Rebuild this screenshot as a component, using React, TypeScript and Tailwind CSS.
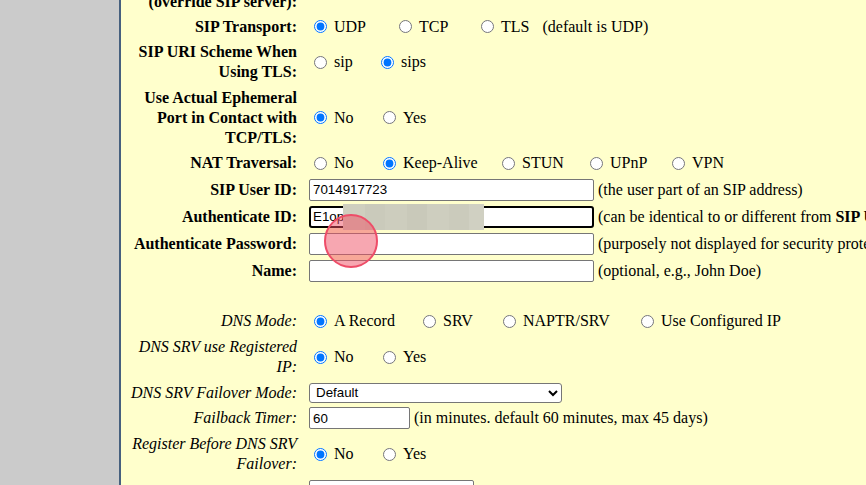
import React from "react";

type Opt = { label: string; checked?: boolean; w?: number };

const widthClass: Record<number, string> = {
  85: "w-[85px]",
  82: "w-[82px]",
  67: "w-[67px]",
  69: "w-[69px]",
  119: "w-[119px]",
  88: "w-[88px]",
  109: "w-[109px]",
  80: "w-[80px]",
  138: "w-[138px]",
};

function Radios({ name, opts, hint }: { name: string; opts: Opt[]; hint?: string }) {
  return (
    <div className="flex items-center">
      {opts.map((o) => (
        <label
          key={o.label}
          className={`flex shrink-0 items-center ${o.w ? widthClass[o.w] : ""}`}
        >
          <input
            type="radio"
            name={name}
            defaultChecked={!!o.checked}
            className="m-0 ml-[5px] mr-[7px] h-[13px] w-[13px] shrink-0"
          />
          <span>{o.label}</span>
        </label>
      ))}
      {hint && <span className="ml-[13px]">{hint}</span>}
    </div>
  );
}

const inputCls =
  "h-[22px] border border-[#767676] rounded-[2px] bg-white px-[3px] text-[13.33px] font-['Liberation_Sans',Arial,sans-serif] text-black outline-none";

function Label({ children, italic }: { children: React.ReactNode; italic?: boolean }) {
  return (
    <td className="p-0 align-middle">
      <div
        className={`w-[179px] pr-[3px] text-right leading-[20px] whitespace-nowrap ${
          italic ? "italic font-normal" : "font-bold"
        }`}
      >
        {children}
      </div>
    </td>
  );
}

function Value({ children }: { children?: React.ReactNode }) {
  return <td className="p-0 pl-[9px] align-middle whitespace-nowrap leading-[20px]">{children}</td>;
}

export default function App() {
  return (
    <div className="relative flex h-[485px] w-[866px] overflow-hidden bg-[#cbcbcb] font-['Liberation_Serif',serif] text-[16px] text-black">
      <div className="w-[119px] shrink-0 bg-[#cbcbcb]" />
      <div className="flex-1 overflow-hidden border-l-2 border-[#46607e] bg-[#ffffcc]">
        <table className="-mt-[11px] w-max border-collapse">
          <tbody>
            <tr className="h-[25px]">
              <Label>(override SIP server):</Label>
              <Value />
            </tr>
            <tr className="h-[25px]">
              <Label>SIP Transport:</Label>
              <Value>
                <Radios
                  name="transport"
                  opts={[
                    { label: "UDP", checked: true, w: 85 },
                    { label: "TCP", w: 82 },
                    { label: "TLS" },
                  ]}
                  hint="(default is UDP)"
                />
              </Value>
            </tr>
            <tr className="h-[46px]">
              <Label>
                SIP URI Scheme When
                <br />
                Using TLS:
              </Label>
              <Value>
                <Radios
                  name="scheme"
                  opts={[{ label: "sip", w: 67 }, { label: "sips", checked: true }]}
                />
              </Value>
            </tr>
            <tr className="h-[65px]">
              <Label>
                Use Actual Ephemeral
                <br />
                Port in Contact with
                <br />
                TCP/TLS:
              </Label>
              <Value>
                <Radios
                  name="ephemeral"
                  opts={[{ label: "No", checked: true, w: 69 }, { label: "Yes" }]}
                />
              </Value>
            </tr>
            <tr className="h-[26px]">
              <Label>NAT Traversal:</Label>
              <Value>
                <Radios
                  name="nat"
                  opts={[
                    { label: "No", w: 69 },
                    { label: "Keep-Alive", checked: true, w: 119 },
                    { label: "STUN", w: 88 },
                    { label: "UPnP", w: 82 },
                    { label: "VPN" },
                  ]}
                />
              </Value>
            </tr>
            <tr className="h-[27px]">
              <Label>SIP User ID:</Label>
              <Value>
                <div className="flex items-center">
                  <input className={`${inputCls} w-[285px]`} defaultValue="7014917723" readOnly />
                  <span className="ml-[4px]">(the user part of an SIP address)</span>
                </div>
              </Value>
            </tr>
            <tr className="h-[27px]">
              <Label>Authenticate ID:</Label>
              <Value>
                <div className="flex items-center">
                  <input
                    className="h-[22px] w-[285px] rounded-[3px] border-2 border-black bg-white px-[2px] text-[13.33px] font-['Liberation_Sans',Arial,sans-serif] text-black outline-none"
                    defaultValue="E1op"
                    readOnly
                  />
                  <span className="ml-[4px]">
                    (can be identical to or different from <b>SIP User ID</b>)
                  </span>
                </div>
              </Value>
            </tr>
            <tr className="h-[27px]">
              <Label>Authenticate Password:</Label>
              <Value>
                <div className="flex items-center">
                  <input type="password" className={`${inputCls} w-[285px]`} readOnly />
                  <span className="ml-[4px]">(purposely not displayed for security protection)</span>
                </div>
              </Value>
            </tr>
            <tr className="h-[27px]">
              <Label>Name:</Label>
              <Value>
                <div className="flex items-center">
                  <input className={`${inputCls} w-[285px]`} readOnly />
                  <span className="ml-[4px]">(optional, e.g., John Doe)</span>
                </div>
              </Value>
            </tr>
            <tr className="h-[24px]">
              <Label>&nbsp;</Label>
              <Value />
            </tr>
            <tr className="h-[26px]">
              <Label italic>DNS Mode:</Label>
              <Value>
                <Radios
                  name="dnsmode"
                  opts={[
                    { label: "A Record", checked: true, w: 109 },
                    { label: "SRV", w: 80 },
                    { label: "NAPTR/SRV", w: 138 },
                    { label: "Use Configured IP" },
                  ]}
                />
              </Value>
            </tr>
            <tr className="h-[46px]">
              <Label italic>
                DNS SRV use Registered
                <br />
                IP:
              </Label>
              <Value>
                <Radios
                  name="srvreg"
                  opts={[{ label: "No", checked: true, w: 69 }, { label: "Yes" }]}
                />
              </Value>
            </tr>
            <tr className="h-[25px]">
              <Label italic>DNS SRV Failover Mode:</Label>
              <Value>
                <select
                  className="h-[20px] w-[253px] rounded-[3px] border border-[#767676] bg-white pl-[2px] text-[13.33px] font-['Liberation_Sans',Arial,sans-serif] text-black"
                  defaultValue="Default"
                >
                  <option>Default</option>
                  <option>Saved one until DNS TTL</option>
                  <option>Saved one until no response</option>
                </select>
              </Value>
            </tr>
            <tr className="h-[26px]">
              <Label italic>Failback Timer:</Label>
              <Value>
                <div className="flex items-center">
                  <input className={`${inputCls} w-[101px]`} defaultValue="60" readOnly />
                  <span className="ml-[4px]">(in minutes. default 60 minutes, max 45 days)</span>
                </div>
              </Value>
            </tr>
            <tr className="h-[46px]">
              <Label italic>
                Register Before DNS SRV
                <br />
                Failover:
              </Label>
              <Value>
                <Radios
                  name="regbefore"
                  opts={[{ label: "No", checked: true, w: 69 }, { label: "Yes" }]}
                />
              </Value>
            </tr>
            <tr className="h-[27px]">
              <Label italic>Primary IP:</Label>
              <Value>
                <input className={`${inputCls} w-[165px]`} readOnly />
              </Value>
            </tr>
          </tbody>
        </table>
      </div>

      {/* blurred (redacted) region over the Authenticate ID value */}
      <div className="absolute left-[343px] top-[204px] flex h-[26px] w-[141px]">
        <div className="h-full w-[22px] bg-[#cfcfbf]" />
        <div className="h-full w-[20px] bg-[#cacabb]" />
        <div className="h-full w-[22px] bg-[#cdcdbe]" />
        <div className="h-full w-[20px] bg-[#c9c9ba]" />
        <div className="h-full w-[22px] bg-[#cecebf]" />
        <div className="h-full w-[20px] bg-[#cbcbbc]" />
        <div className="h-full w-[15px] bg-[#d0d0c2]" />
      </div>

      {/* touch indicator */}
      <div className="absolute left-[324px] top-[214px] h-[54px] w-[54px] rounded-full border-2 border-[#ee4d68] bg-[rgba(240,80,100,0.5)]" />
    </div>
  );
}
